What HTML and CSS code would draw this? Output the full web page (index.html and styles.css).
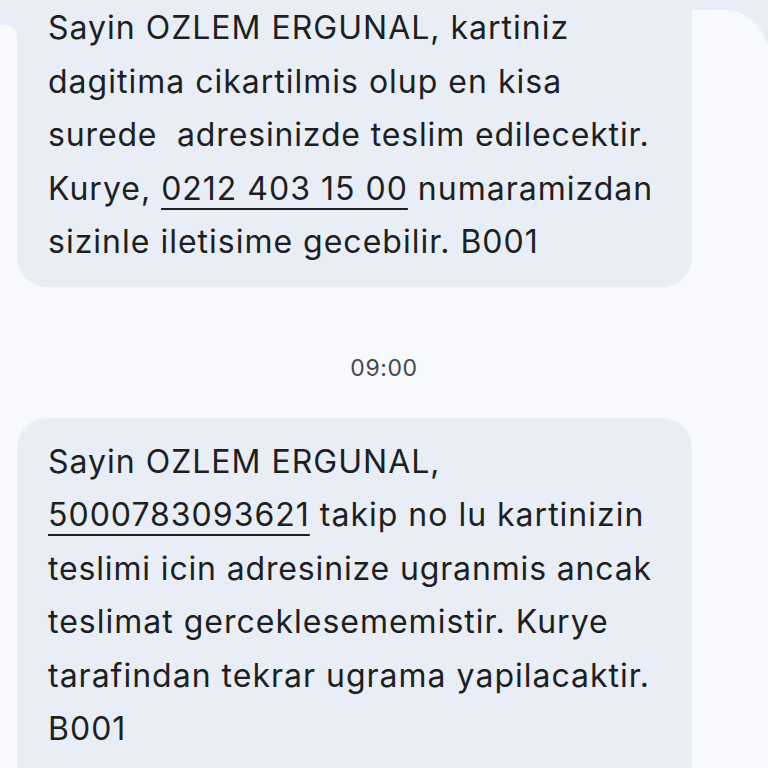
FILE: index.html
```html
<!DOCTYPE html>
<html lang="tr">
<head>
<meta charset="utf-8">
<link rel="stylesheet" href="styles.css">
</head>
<body>
<div class="thread">
  <div class="row row-top">
    <div class="gutter-left"></div>
    <div class="bubble bubble-first">
      <p class="msg">Sayin OZLEM ERGUNAL, kartiniz<br>dagitima cikartilmis olup en kisa<br><span class="tight">surede&nbsp; adresinizde teslim edilecektir.</span><br>Kurye, <span class="link">0212 403 15 00</span> numaramizdan<br>sizinle iletisime gecebilir. B001</p>
    </div>
    <div class="gutter-right"></div>
  </div>
  <div class="time">09:00</div>
  <div class="row">
    <div class="bubble bubble-second">
      <p class="msg">Sayin OZLEM ERGUNAL,<br><span class="link">5000783093621</span> takip no lu kartinizin<br><span class="tight">teslimi icin adresinize ugranmis ancak</span><br>teslimat gerceklesememistir. Kurye<br>tarafindan tekrar ugrama yapilacaktir.<br>B001</p>
    </div>
  </div>
</div>
</body>
</html>
```

FILE: styles.css
```css
html, body {
  margin: 0;
  padding: 0;
  background: #f7f9fc;
  height: 768px;
  overflow: hidden;
}
body {
  font-family: Inter, "Open Sans", sans-serif;
  color: #1d1f23;
}
.thread {
  display: flex;
  flex-direction: column;
}
.row {
  display: flex;
  align-items: flex-start;
}
.row-top {
  margin-top: -16px;
  background: linear-gradient(#e9edf5 0 60px, transparent 60px);
  align-items: stretch;
}
.gutter-left {
  flex: 0 0 17px;
  margin-top: 41px;
  background: #f7f9fc;
  border-top-right-radius: 10px;
}
.gutter-right {
  flex: 1;
  margin-top: 26px;
  background: #f7f9fc;
  border-top-left-radius: 3px;
  border-top-right-radius: 44px;
}
.bubble {
  flex: 0 0 675px;
  box-sizing: border-box;
  background: #e9edf5;
  padding: 17px 10px 18px 31px;
}
.row:not(.row-top) {
  padding-left: 17px;
}
.bubble-first {
  border-radius: 0 0 30px 30px;
}
.bubble-second {
  border-radius: 30px 30px 0 0;
  height: 400px;
}
.msg {
  margin: 0;
  font-size: 32px;
  letter-spacing: 1px;
  line-height: 53.5px;
  white-space: nowrap;
}
.tight {
  letter-spacing: 0.85px;
}
.link {
  text-decoration: underline;
  text-decoration-thickness: 2px;
  text-underline-offset: 8px;
}
.time {
  text-align: center;
  font-size: 23px;
  letter-spacing: 0.6px;
  line-height: 30px;
  color: #44474c;
  padding: 66px 0 35px;
}
```
